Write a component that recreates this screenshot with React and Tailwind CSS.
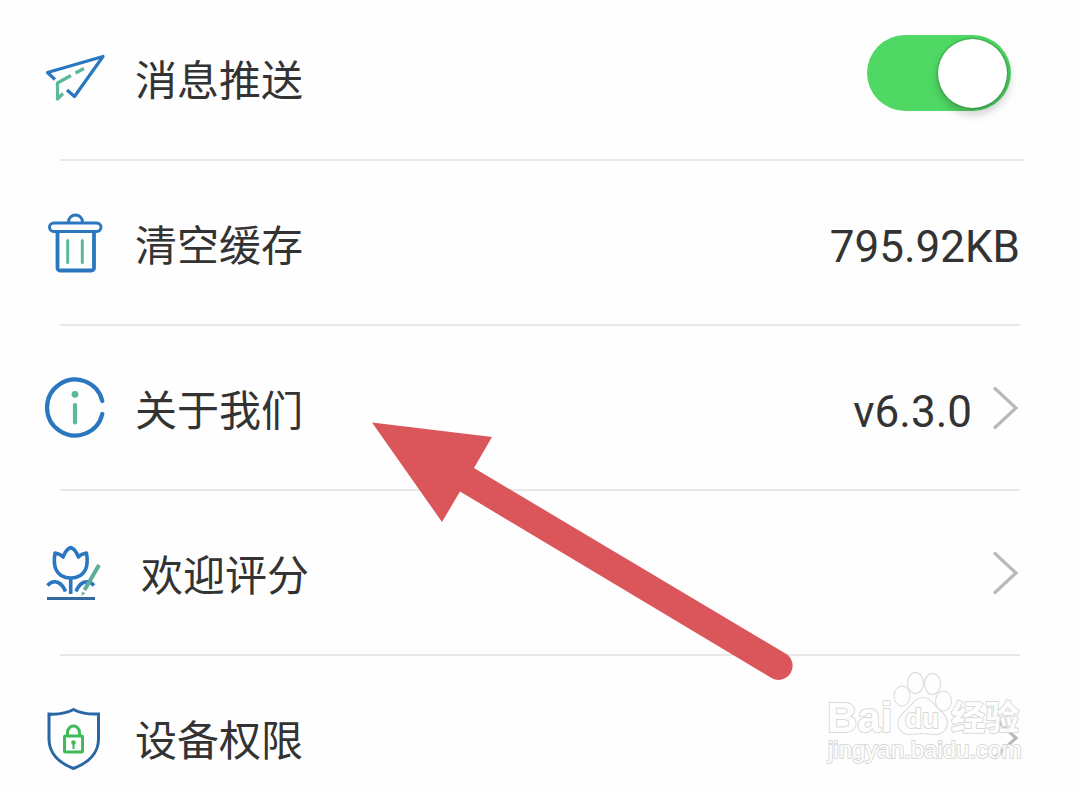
import React, { useState } from "react";

function PlaneIcon() {
  return (
    <svg viewBox="0 0 60 60" fill="none" strokeWidth="3.2" strokeLinejoin="round" className="w-15 h-15 shrink-0 overflow-visible">
      <path d="M10 31.500L2.500 24.500L58 8.500L29.500 48.500L22 42" stroke="#2a77c0" />
      <path d="M39 20.500L30.500 25M26 27.500L12.500 35V51L18 45.500" stroke="#5bb89c" />
    </svg>
  );
}

function TrashIcon() {
  return (
    <svg viewBox="0 0 60 60" fill="none" className="w-15 h-15 shrink-0 overflow-visible">
      <g stroke="#2a77c0" strokeWidth="3">
        <path d="M23.500 10V9a7 7 0 0 1 14 0v1" />
        <rect x="4.500" y="10" width="51.500" height="8.500" rx="4.250" />
        <path d="M12.500 19v36a2.500 2.500 0 0 0 2.500 2.500h31.500a2.500 2.500 0 0 0 2.500-2.500V19" strokeWidth="3.800" />
      </g>
      <path d="M22.700 27.500v22M37.300 27.500v22" stroke="#5bb89c" strokeWidth="3" strokeLinecap="round" />
    </svg>
  );
}

function InfoIcon() {
  return (
    <svg viewBox="0 0 60 60" fill="none" strokeWidth="4.200" strokeLinecap="round" className="w-15 h-15 shrink-0 overflow-visible">
      <path d="M57.300 23A28 28 0 1 0 57.300 36" stroke="#2a77c0" />
      <circle cx="30" cy="16.300" r="3.400" fill="#5bb89c" />
      <path d="M30 27v17.500" stroke="#5bb89c" />
    </svg>
  );
}

function FlowerIcon() {
  return (
    <svg viewBox="0 0 66 60" fill="none" strokeWidth="3.600" strokeLinejoin="round" className="w-[66px] h-15 shrink-0 overflow-visible">
      <g stroke="#2a77c0">
        <path d="M10 10C13 10.500 16 11.500 18 14C20 9 22.500 5.500 25.700 4.500C29 5.500 31.500 9 33.500 14C35.500 11.500 38.500 10.500 41.500 10C42.500 16 42.500 22 40.500 26.500C38 32 32.500 35 25.700 35C19 35 13.500 32 11 26.500C9 22 9 16 10 10Z" />
        <path d="M25.700 35V51" />
        <path d="M2.500 42.500C6 38.500 9 37.800 13 39.500C17 41.200 19 44.500 20.500 48.500M31 48.500C32.500 44.500 34.500 41.200 38.500 39.500C42.500 37.800 45.500 38.500 49 42.500" />
        <path d="M2 55.500H50" stroke="#34699f" strokeWidth="3" />
      </g>
      <path d="M54 22L39.500 47" stroke="#5aad99" strokeWidth="4" strokeLinejoin="miter" />
      <path d="M37 48.500L40.500 50.200L36.500 53Z" fill="#7fa7a2" />
    </svg>
  );
}

function ShieldIcon() {
  return (
    <svg viewBox="0 0 60 60" fill="none" strokeWidth="3" className="w-15 h-15 shrink-0 overflow-visible">
      <path d="M28.500 1.500C22 5 12 6.500 4 6V31C4 45 14 55 28.500 60.500C43 55 53.500 45 53.500 31V6C45 6.500 35 5 28.500 1.500Z" stroke="#2866a5" />
      <g stroke="#3fba57">
        <rect x="19.500" y="28" width="18" height="16" rx="1" />
        <path d="M22.500 28V24.500a6 6.500 0 0 1 12 0V28" />
        <path d="M28.500 35v6" strokeWidth="2" />
      </g>
      <circle cx="28.500" cy="34.500" r="2.300" fill="#3fba57" />
    </svg>
  );
}

function Chevron() {
  return (
    <svg viewBox="0 0 30 44" fill="none" className="w-[30px] h-11 shrink-0">
      <path d="M5 2.500L26 22L5 41.500" stroke="#b9b9b9" strokeWidth="3.200" strokeLinecap="round" />
    </svg>
  );
}

function Divider({ className = "mr-15" }) {
  return <hr className={`ml-15 border-t-2 border-[#e8e8e8] ${className}`} />;
}

const rowClass = "flex w-full items-center gap-[30px] pt-[52px] pb-[51px] pl-[45px] pr-15 text-left";
const labelClass = "flex-1 text-[42px] leading-[60px]";
const valueClass = "pt-2 font-[Roboto,sans-serif] text-[44px] leading-[52px]";

function PushRow() {
  const [enabled, setEnabled] = useState(true);
  return (
    <label className={`${rowClass} cursor-pointer`}>
      <PlaneIcon />
      <span className={labelClass}>消息推送</span>
      <input
        type="checkbox"
        role="switch"
        checked={enabled}
        onChange={(e) => setEnabled(e.target.checked)}
        className="sr-only"
      />
      <span className="-my-4 pb-2.5 pr-[9px]">
        <span
          className={`flex h-[76px] w-36 items-center rounded-full px-1 ${
            enabled ? "justify-end bg-[#4fd964]" : "justify-start bg-gray-300"
          }`}
        >
          <span className="h-[69px] w-[69px] rounded-full bg-white shadow-[1px_5px_9px_2px_rgba(0,0,0,0.18),0_0_2px_1px_rgba(0,0,0,0.2)]" />
        </span>
      </span>
    </label>
  );
}

function LinkRow({ icon, label, value }) {
  return (
    <a href="#" className={rowClass}>
      {icon}
      <span className={labelClass}>{label}</span>
      <span className="flex items-center gap-[18px]">
        {value && <span className={valueClass}>{value}</span>}
        <Chevron />
      </span>
    </a>
  );
}

function Arrow() {
  return (
    <svg viewBox="0 0 422 258" className="pointer-events-none absolute left-[372px] top-[422px] h-[258px] w-[422px]">
      <path d="M0 0.500L120 15L102 46L413.500 231.500A14 14 0 0 1 399.500 256L88 69.500L70 100Z" fill="#db565b" />
    </svg>
  );
}

function Watermark() {
  return (
    <svg
      viewBox="0 0 200 100"
      className="pointer-events-none absolute right-[55px] top-[668px] h-[100px] w-[200px]"
      fill="#ffffff"
      stroke="#d6d6d6"
      strokeWidth="2"
      strokeLinejoin="round"
      paintOrder="stroke"
      opacity="0.9"
    >
      <g fontFamily="Liberation Sans, Noto Sans CJK SC, sans-serif" fontWeight="bold">
        <text x="2" y="64" fontSize="42">Bai</text>
        <ellipse cx="77" cy="28" rx="7.500" ry="9.500" />
        <ellipse cx="90.500" cy="15" rx="7.500" ry="10" />
        <ellipse cx="107.500" cy="16" rx="7.500" ry="10" />
        <ellipse cx="118.500" cy="33" rx="7.500" ry="9.500" />
        <path d="M98 30C106 30 109 38 115 43C121 48 124 54 120 61C115 69 105 65 97 65C89 65 80 69 75 61C71 54 75 48 81 43C87 38 90 30 98 30Z" />
        <text x="80" y="60" fontSize="28">du</text>
        <text x="126" y="62" fontSize="34">经验</text>
      </g>
      <text x="3" y="90" fontSize="24" fontFamily="Liberation Sans, sans-serif">jingyan.baidu.com</text>
    </svg>
  );
}

export default function App() {
  return (
    <main className="relative min-h-screen overflow-hidden bg-[#fefefe] font-['Noto_Sans_CJK_SC',sans-serif] text-[#333]">
      <ul className="-mt-1">
        <li>
          <PushRow />
          <Divider className="mr-14" />
        </li>
        <li>
          <button type="button" className={rowClass}>
            <TrashIcon />
            <span className={labelClass}>清空缓存</span>
            <span className={valueClass}>795.92KB</span>
          </button>
          <Divider />
        </li>
        <li>
          <LinkRow icon={<InfoIcon />} label="关于我们" value="v6.3.0" />
          <Divider />
        </li>
        <li>
          <LinkRow icon={<FlowerIcon />} label="欢迎评分" />
          <Divider />
        </li>
        <li className="-mb-8">
          <LinkRow icon={<ShieldIcon />} label="设备权限" />
        </li>
      </ul>
      <Arrow />
      <Watermark />
    </main>
  );
}
